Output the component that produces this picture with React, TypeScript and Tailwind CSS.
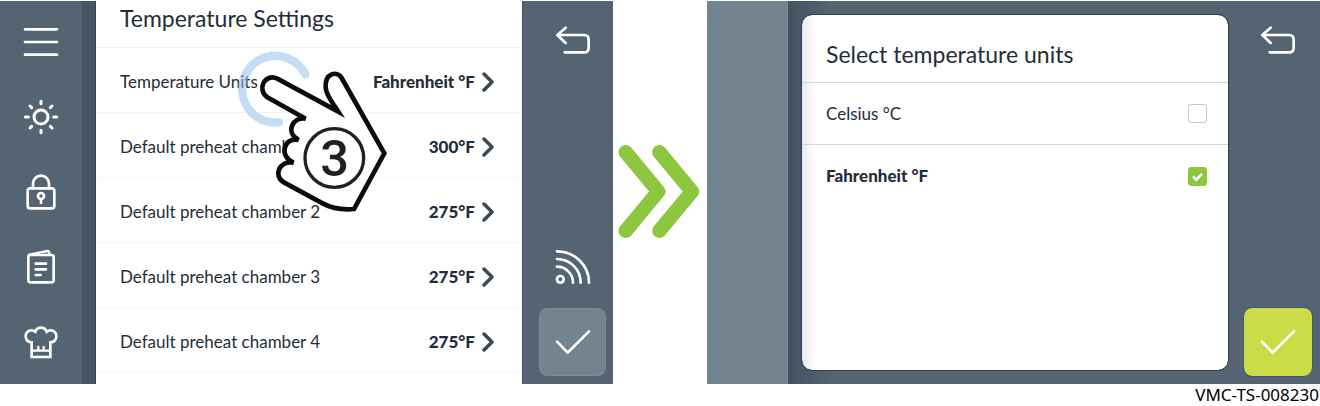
import { useState, type ReactNode } from "react";

const SETTINGS = [
  { label: "Temperature Units", value: "Fahrenheit °F" },
  { label: "Default preheat chamber 1", value: "300°F" },
  { label: "Default preheat chamber 2", value: "275°F" },
  { label: "Default preheat chamber 3", value: "275°F" },
  { label: "Default preheat chamber 4", value: "275°F" },
];

const UNITS = [
  { id: "celsius", label: "Celsius °C" },
  { id: "fahrenheit", label: "Fahrenheit °F" },
];

/** White line icon on a 108 unit grid, drawn at 36px. */
function LineIcon({ children }: { children: ReactNode }) {
  return (
    <svg
      viewBox="0 0 108 108"
      className="size-9 shrink-0"
      fill="none"
      stroke="white"
      strokeWidth={8}
      strokeLinecap="round"
      strokeLinejoin="round"
      aria-hidden="true"
    >
      {children}
    </svg>
  );
}

const MenuIcon = () => (
  <LineIcon>
    <path d="M6 16H102M6 54H102M6 92H102" />
  </LineIcon>
);

const SunIcon = () => (
  <LineIcon>
    <circle cx="54" cy="54" r="21" strokeWidth={9} />
    <path d="M54 7V14M54 94V101M7 54H16M92 54H101M21 21L26 26M82 82L87 87M87 21L82 26M26 82L21 87" strokeWidth={9} />
  </LineIcon>
);

const LockIcon = () => (
  <LineIcon>
    <rect x="14" y="43" width="80" height="60" rx="8" />
    <path d="M30 43V29a24 24 0 0 1 48 0V43" />
    <circle cx="54" cy="66" r="9" />
    <path d="M54 76V87" />
  </LineIcon>
);

const RecipesIcon = () => (
  <LineIcon>
    <rect x="16" y="18" width="76" height="82" rx="6" />
    <path d="M19 17L74 6Q79 5 79 16" strokeWidth={7} />
    <path d="M38 44H69M38 61H69M38 78H53" />
  </LineIcon>
);

const ChefIcon = () => (
  <LineIcon>
    <path d="M26 99V55A18 18 0 1 1 37 23A18 18 0 0 1 71 23A18 18 0 1 1 82 55V99Z" strokeLinejoin="miter" />
    <path d="M28 80H80M46 69V78M62 69V78" strokeWidth={7} />
  </LineIcon>
);

const BackIcon = () => (
  <LineIcon>
    <path d="M32 17L7 39L32 63M9 39H87Q101 39 101 53V77Q101 91 87 91H29" />
  </LineIcon>
);

const SignalIcon = () => (
  <LineIcon>
    <circle cx="16" cy="91" r="10" />
    <path d="M6 53A48 48 0 0 1 54 101M6 30A71 71 0 0 1 77 101M6 7A96 94 0 0 1 102 101" />
  </LineIcon>
);

const CheckIcon = () => (
  <LineIcon>
    <path d="M6 53L38 86L102 22" />
  </LineIcon>
);

const NAV = [
  { name: "Menu", Icon: MenuIcon },
  { name: "Brightness", Icon: SunIcon },
  { name: "Lock", Icon: LockIcon },
  { name: "Recipes", Icon: RecipesIcon },
  { name: "Cooking", Icon: ChefIcon },
];

// Pointing hand with the step number and the touch ring under its fingertip.
function TouchHand() {
  return (
    <svg
      viewBox="0 0 510 540"
      className="pointer-events-none absolute left-[230px] top-[39px] h-[180px] w-[170px]"
      fill="none"
      aria-hidden="true"
    >
      <path
        d="M226 103A100 100 0 1 0 147 247"
        stroke="#97bfed"
        strokeOpacity={0.55}
        strokeWidth={25}
        strokeLinecap="round"
      />
      <path
        d="M325 215L142 116C105 98 79 148 112 172L227 236C190 228 163 276 206 300C160 290 146 350 191 368C147 360 128 409 163 428L278 490Q318 512 372 507L463 340L335 114C322 91 284 98 287 143C289 168 308 188 325 215Z"
        fill="white"
        stroke="#0b0b0b"
        strokeWidth={14}
      />
      <circle cx="313" cy="354" r="88" stroke="#231f20" strokeWidth={10} />
      <text
        x="314"
        y="409"
        textAnchor="middle"
        fill="#231f20"
        className="font-['Roboto',sans-serif] text-[152px] font-medium"
      >
        3
      </text>
    </svg>
  );
}

function SettingsScreen() {
  return (
    <section className="relative flex min-w-0 flex-1 bg-[#546473]">
      <nav className="flex w-[82px] shrink-0 flex-col pt-[3px]">
        {NAV.map(({ name, Icon }) => (
          <button key={name} aria-label={name} className="flex h-[75px] items-center justify-center">
            <Icon />
          </button>
        ))}
      </nav>
      <div className="w-3.5 shrink-0 border-r border-[#2f4057] bg-[#485663]" />

      <div className="min-w-0 flex-1 overflow-hidden bg-white text-[#1f2d3a]">
        <h1 className="flex h-[47px] items-center border-b border-[#f0f5f6] px-6 pb-3 text-[23px] leading-7">
          Temperature Settings
        </h1>
        <ul>
          {SETTINGS.map((s) => (
            <li key={s.label}>
              <button className="flex h-[65px] w-full items-center border-b border-[#f3f6f7] pl-6 pr-7 pt-1 text-left text-[17px]">
                <span className="flex-1">{s.label}</span>
                <span className="font-black">{s.value}</span>
                <svg viewBox="0 0 12 20" className="ml-[7px] h-5 w-3" fill="none" aria-hidden="true">
                  <path d="M2 2L10 10L2 18" stroke="#3c4954" strokeWidth={3.5} strokeLinejoin="round" strokeLinecap="round" />
                </svg>
              </button>
            </li>
          ))}
        </ul>
      </div>

      <aside className="flex w-[91px] shrink-0 flex-col items-stretch border-l border-[#43556a] pb-2 pl-4 pr-[7px] pt-[21px]">
        <button aria-label="Back" className="flex h-9 items-center justify-center">
          <BackIcon />
        </button>
        <button aria-label="Connection" className="mb-[23px] mt-auto flex h-9 items-center justify-center">
          <SignalIcon />
        </button>
        <button aria-label="Confirm" className="flex h-[68px] items-center justify-center rounded-lg border border-[#7c8b96] bg-[#73848f]">
          <CheckIcon />
        </button>
      </aside>

      <TouchHand />
    </section>
  );
}

function UnitsScreen() {
  const [unit, setUnit] = useState("fahrenheit");

  return (
    <section className="flex min-w-0 flex-1 bg-[#546473]">
      <div className="w-[81px] shrink-0 border-r border-[#7f8d98] bg-[#748390]" />
      <div className="flex min-w-0 flex-1 bg-linear-to-r from-[#445260] to-[#546473] to-10% pb-3.5 pl-3.5 pt-3.5">
        <div className="min-w-0 flex-1 overflow-hidden rounded-[10px] bg-linear-to-r from-[#e9e9e9] to-white to-3% text-[#1f2d3a] outline-1 outline-[#2f4057]">
          <h2 className="flex h-[68px] items-center border-b border-[#c5dfe0] px-6 pt-2.5 text-[23px] leading-7">
            Select temperature units
          </h2>
          {UNITS.map((u) => (
            <label
              key={u.id}
              htmlFor={u.id}
              className="flex h-[62px] items-center border-b border-[#c5dfe0] pl-6 pr-[21px] text-[17px] last:border-b-0 has-checked:font-black"
            >
              <span className="flex-1">{u.label}</span>
              <span className="relative size-[19px]">
                <input
                  id={u.id}
                  type="checkbox"
                  checked={unit === u.id}
                  onChange={() => setUnit(u.id)}
                  className="block size-full appearance-none rounded-[3px] border border-[#c4c8ca] bg-white checked:border-[#8dc63f] checked:bg-[#8dc63f]"
                />
                {unit === u.id && (
                  <svg viewBox="0 0 19 19" className="pointer-events-none absolute inset-0" fill="none" aria-hidden="true">
                    <path d="M5 9.5L8.2 12.7L14 6.8" stroke="white" strokeWidth={2.6} />
                  </svg>
                )}
              </span>
            </label>
          ))}
        </div>
      </div>
      <aside className="flex w-[92px] shrink-0 flex-col pb-2 pl-4 pr-2 pt-[21px]">
        <button aria-label="Back" className="flex h-9 items-center justify-center">
          <BackIcon />
        </button>
        <button aria-label="Confirm" className="mt-auto flex h-[68px] items-center justify-center rounded-lg bg-[#cadd47] outline-1 outline-[#46577c]">
          <CheckIcon />
        </button>
      </aside>
    </section>
  );
}

export default function App() {
  return (
    <main className="bg-white pt-px font-['Lato',sans-serif]">
      <div className="flex h-[383px]">
        <SettingsScreen />
        <div className="flex w-[94px] shrink-0 items-center justify-center pb-0.5 pr-0.5">
          <svg
            viewBox="0 0 246 284"
            className="h-[95px] w-[82px]"
            fill="none"
            stroke="#8dc63f"
            strokeWidth={43}
            strokeLinecap="round"
            strokeLinejoin="round"
            aria-hidden="true"
          >
            <path d="M23 24L121 142L23 260M124 24L222 142L124 260" />
          </svg>
        </div>
        <UnitsScreen />
      </div>
      <p className="pr-px text-right font-['Noto_Sans',sans-serif] text-[17px] leading-[22px] text-black">VMC-TS-008230</p>
    </main>
  );
}
